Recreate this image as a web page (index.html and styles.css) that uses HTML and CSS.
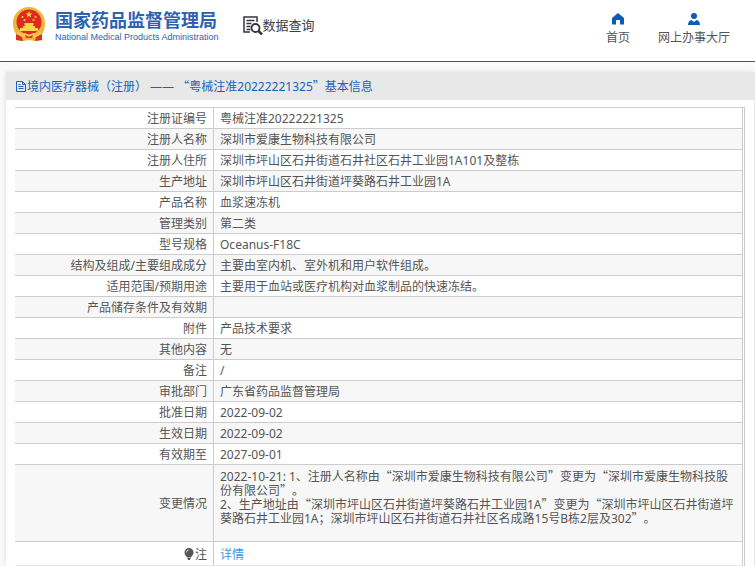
FILE: index.html
```html
<!DOCTYPE html>
<html lang="zh-CN">
<head>
<meta charset="utf-8">
<meta name="viewport" content="width=device-width, initial-scale=1">
<title>国家药品监督管理局 数据查询</title>
<link rel="stylesheet" href="styles.css">
</head>
<body>
<header class="top">
  <a class="brand" href="#">
    <svg class="emblem" viewBox="0 0 34 36" aria-hidden="true">
      <path d="M17 1C8 1 1 8 1 17c0 6 2 10 4 12l-1 5 7 1 6-1 6 1 7-1-1-5c2-2 4-6 4-12C33 8 26 1 17 1z" fill="#efb73a"/>
      <circle cx="17" cy="16" r="12.5" fill="#de2a1f"/>
      <path d="M17 5l.9 2.4h2.5l-2 1.600.8 2.500-2.200-1.500-2.200 1.500.8-2.500-2-1.600h2.500z" fill="#ffd54a"/>
      <g fill="#ffd54a">
        <circle cx="10.500" cy="11" r="1"/><circle cx="12.500" cy="14" r="1"/>
        <circle cx="21.500" cy="14" r="1"/><circle cx="23.500" cy="11" r="1"/>
        <path d="M12 18l1-1h8l1 1-1 1v1h2v2h3v3H8v-3h3v-2h2v-1z"/>
      </g>
      <path d="M5 26l5 2 3-1 4 2 4-2 3 1 5-2-1 5-5 1-6-2-6 2-5-1z" fill="#f3c651"/>
      <path d="M4 28l6 3 1 4-7-1zM30 28l-6 3-1 4 7-1zM13 29l4 2 4-2-1 3h-6z" fill="#d8321f"/>
    </svg>
    <span class="brand-text">
      <span class="brand-cn">国家药品监督管理局</span>
      <span class="brand-en">National Medical Products Administration</span>
    </span>
  </a>
  <a class="query" href="#">
    <svg class="query-icon" viewBox="0 0 20 20" aria-hidden="true" fill="none" stroke="#35353d">
      <path d="M7 17H1V2h13v5" stroke-width="1.500"/>
      <path d="M3.500 5.500h8M3.500 8.500h5M3.500 11.500h4M3.500 14.500h4" stroke-width="1.300"/>
      <circle cx="12.500" cy="13" r="4" stroke-width="1.800"/>
      <path d="M15.500 16l3.500 3.500" stroke-width="2.500"/>
    </svg>
    <span>数据查询</span>
  </a>
  <nav class="links">
    <a href="#">
      <svg viewBox="0 0 12 12" aria-hidden="true"><path d="M6 0l6 5v6.500H8V7H4v4.500H0V5z"/></svg>
      <span>首页</span>
    </a>
    <a href="#">
      <svg viewBox="0 0 12 12" aria-hidden="true"><circle cx="6" cy="3" r="3"/><path d="M0 12c0-3 1.500-4.500 3.500-5L6 9l2.500-2C10.500 7.500 12 9 12 12z"/></svg>
      <span>网上办事大厅</span>
    </a>
  </nav>
</header>
<main class="panel">
  <h1 class="title">
    <svg viewBox="0 0 10 11" aria-hidden="true" fill="none" stroke="#1a63b8"><path d="M.500.500H6.500L9.500 3.500V10.500H.500zM6.500.500V3.500H9.500M2.500 5.500h5M2.500 7.500h5M2.500 3.500h2"/></svg>
    <span>境内医疗器械（注册） —— <span class="q">“</span>粤械注准20222221325<span class="q">”</span>基本信息</span>
  </h1>
  <div class="sheet">
    <table class="info">
      <tbody>
        <tr><th scope="row">注册证编号</th><td>粤械注准20222221325</td></tr>
        <tr><th scope="row">注册人名称</th><td>深圳市爱康生物科技有限公司</td></tr>
        <tr><th scope="row">注册人住所</th><td>深圳市坪山区石井街道石井社区石井工业园1A101及整栋</td></tr>
        <tr><th scope="row">生产地址</th><td>深圳市坪山区石井街道坪葵路石井工业园1A</td></tr>
        <tr><th scope="row">产品名称</th><td>血浆速冻机</td></tr>
        <tr><th scope="row">管理类别</th><td>第二类</td></tr>
        <tr><th scope="row">型号规格</th><td>Oceanus-F18C</td></tr>
        <tr><th scope="row">结构及组成/主要组成成分</th><td>主要由室内机、室外机和用户软件组成。</td></tr>
        <tr><th scope="row">适用范围/预期用途</th><td>主要用于血站或医疗机构对血浆制品的快速冻结。</td></tr>
        <tr><th scope="row">产品储存条件及有效期</th><td></td></tr>
        <tr><th scope="row">附件</th><td>产品技术要求</td></tr>
        <tr><th scope="row">其他内容</th><td>无</td></tr>
        <tr><th scope="row">备注</th><td>/</td></tr>
        <tr><th scope="row">审批部门</th><td>广东省药品监督管理局</td></tr>
        <tr><th scope="row">批准日期</th><td>2022-09-02</td></tr>
        <tr><th scope="row">生效日期</th><td>2022-09-02</td></tr>
        <tr><th scope="row">有效期至</th><td>2027-09-01</td></tr>
        <tr class="changes"><th scope="row">变更情况</th><td>
          <p>2022-10-21: 1、注册人名称由<span class="q">“</span>深圳市爱康生物科技有限公司<span class="q">”</span>变更为<span class="q">“</span>深圳市爱康生物科技股份有限公司<span class="q">”</span>。</p>
          <p>2、生产地址由<span class="q">“</span>深圳市坪山区石井街道坪葵路石井工业园1A<span class="q">”</span>变更为<span class="q">“</span>深圳市坪山区石井街道坪葵路石井工业园1A；深圳市坪山区石井街道石井社区名成路15号B栋2层及302<span class="q">”</span>。</p>
        </td></tr>
        <tr class="note"><th scope="row"><svg class="bulb" viewBox="0 0 10 12" aria-hidden="true"><path d="M5 0a4.500 4.500 0 0 1 4.500 4.500C9.500 7 7.500 8 7 9.500H3C2.500 8 .500 7 .500 4.500A4.500 4.500 0 0 1 5 0zM3.500 10h3v1l-.800 1H4.300l-.800-1z" fill="#555"/><path d="M2.300 4.500A2.700 2.700 0 0 1 4.500 2" fill="none" stroke="#ddd"/></svg>注</th><td><a href="#">详情</a></td></tr>
      </tbody>
    </table>
  </div>
</main>
</body>
</html>
```
FILE: styles.css
```css
* {
  box-sizing: border-box;
}

body {
  margin: 0;
  background: #fafafa;
  color: #555;
  font: 12px/14px "Noto Sans", "Noto Sans CJK SC", sans-serif;
  text-spacing-trim: space-all;
}

a {
  color: inherit;
  text-decoration: none;
}

svg {
  flex: none;
}

/* full-width Chinese quotation marks */
.q {
  font-family: "Noto Sans CJK SC", sans-serif;
  line-height: 0;
}

.top {
  display: flex;
  align-items: flex-start;
  height: 62px;
  padding: 6px 25px 0 12px;
  background: #fff;
  border-bottom: 1px solid #1c5f96;
}

.brand {
  display: flex;
  gap: 9px;
  color: #2d62b0;
}

.emblem {
  width: 34px;
  height: 36px;
}

.brand-text {
  display: flex;
  flex-direction: column;
  padding-top: 4px;
}

.brand-cn {
  font-size: 18px;
  line-height: 20px;
  font-weight: 700;
}

.brand-en {
  font: 400 9px/14px "Liberation Sans", sans-serif;
}

.query {
  display: flex;
  align-items: center;
  padding: 9px 0 0 24px;
  color: #3c3c44;
  font-size: 13px;
  line-height: 20px;
}

.query-icon {
  width: 20px;
  height: 20px;
}

.links {
  display: flex;
  gap: 28px;
  margin-left: auto;
  padding-top: 7px;
}

.links a {
  display: flex;
  flex-direction: column;
  align-items: center;
  gap: 6px;
}

.links svg {
  width: 12px;
  height: 12px;
  fill: #0b5cb8;
}

.panel {
  margin: 10px 0 0 6px;
  background: #fff;
  border-right: 1px solid #e8e8e8;
  box-shadow: 0 0 5px #ddd;
}

.title {
  display: flex;
  align-items: center;
  gap: 1px;
  height: 28px;
  margin: 0 -1px 0 0;
  padding: 1px 10px 0;
  background: #e8e8e8;
  color: #1a63b8;
  font-size: 12px;
  font-weight: 400;
}

.title svg {
  width: 10px;
  height: 11px;
}

.sheet {
  margin: 7px 9px 0 9px;
  padding-right: 1px;
  border-top: 1px solid #ccc;
  border-right: 1px solid #ccc;
}

.info {
  width: 100%;
  border-spacing: 0;
  border-right: 1px solid #ccc;
}

.info th,
.info td {
  height: 21px;
  padding: 2px 6px 0;
  border-bottom: 1px solid #ccc;
  text-align: left;
}

.info th {
  width: 199px;
  border-right: 1px solid #ccc;
  font-weight: 400;
  text-align: right;
}

.info tr:nth-child(even) {
  background: #f7f7f7;
}

.info .changes td {
  height: 77px;
  padding: 5px 6px;
  vertical-align: top;
}

.changes p {
  margin: 0;
}

.info .note th,
.info .note td {
  height: 24px;
  padding-top: 3px;
  border-bottom-color: #e8e8e8;
}

.note a {
  color: #3d94e0;
}

.bulb {
  width: 10px;
  height: 12px;
  margin-right: 1px;
  vertical-align: -1px;
}
```
